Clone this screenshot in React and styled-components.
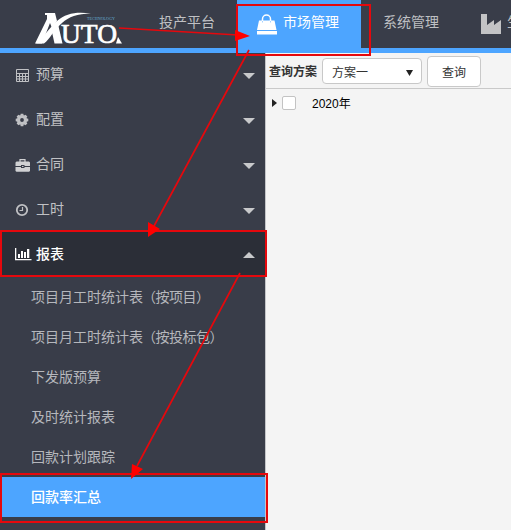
import React from "react";
import styled, { createGlobalStyle } from "styled-components";

const GlobalStyle = createGlobalStyle`
  * { box-sizing: border-box; }
  body {
    margin: 0;
    overflow: hidden;
    font-family: "Liberation Sans", "Noto Sans CJK SC", sans-serif;
    font-size: 14px;
  }
`;

const Page = styled.div`
  position: relative;
  display: flex;
  flex-direction: column;
  width: 511px;
  height: 530px;
  overflow: hidden;
  background: #f4f4f4;
`;

const Header = styled.header`
  display: flex;
  flex: none;
  height: 53px;
  background: #393d49;
  border-bottom: 5px solid #4da5ff;
`;

const LogoBox = styled.div`
  flex: none;
  width: 137px;
`;

const NavItem = styled.div`
  display: flex;
  flex: none;
  align-items: center;
  gap: 6px;
  width: ${(p) => p.$width}px;
  padding: 0 0 4px ${(p) => p.$inset}px;
  color: ${(p) => (p.$active ? "#fff" : "#bfc0c3")};
  background: ${(p) => (p.$active ? "#4da5ff" : "transparent")};
  line-height: 20px;
  white-space: nowrap;

  svg { flex: none; margin-top: 4px; }
`;

const Body = styled.div`
  display: flex;
  flex: 1;
  min-height: 0;
`;

const Sidebar = styled.nav`
  flex: none;
  width: 266px;
  background: #393d49;
  border-right: 1px solid #c4c5c8;
`;

const MenuRow = styled.div`
  display: flex;
  align-items: center;
  height: 45px;
  margin-top: ${(p) => (p.$active ? "-1px" : "0")};
  padding: 0 10px 3px 14px;
  color: ${(p) => (p.$active ? "#fff" : "#c0c1c4")};
  background: ${(p) => (p.$active ? "#2b2e37" : "transparent")};
  font-weight: ${(p) => (p.$active ? 500 : 400)};
`;

const MenuLabel = styled.span`
  padding-bottom: ${(p) => (p.$active ? 0 : 3)}px;
`;

const IconSlot = styled.span`
  display: flex;
  align-items: center;
  width: 22px;
  height: 18px;
  padding-top: 2px;
`;

const Caret = styled.i`
  width: 0;
  height: 0;
  margin: 3px 0 0 auto;
  border: 6px solid transparent;
  border-width: ${(p) => (p.$up ? "0 6px 6px" : "6px 6px 0")};
  border-color: ${(p) => (p.$up ? "transparent transparent #c8c9cb" : "#c8c9cb transparent transparent")};
`;

const SubRow = styled.div`
  display: flex;
  align-items: center;
  height: 40px;
  padding: 0 0 2px 31px;
  color: ${(p) => (p.$active ? "#fff" : "#b5b7bc")};
  background: ${(p) => (p.$active ? "#4da5ff" : "transparent")};
  font-weight: ${(p) => (p.$active ? 500 : 400)};
  white-space: nowrap;
`;

const Qualifier = styled.span`
  margin-left: -1px;
  letter-spacing: -0.5px;
`;

const Content = styled.main`
  flex: 1;
  min-width: 0;
`;

const Toolbar = styled.div`
  display: flex;
  align-items: center;
  height: 36px;
  padding: 1px 0 0 3px;
  border-bottom: 1px solid #c9c9c9;
  font-size: 12px;
  color: #333;
`;

const FieldLabel = styled.label`
  width: 53px;
  padding-top: 1px;
  font-weight: 700;
  line-height: 18px;
`;

const Select = styled.div`
  display: flex;
  align-items: center;
  justify-content: space-between;
  width: 100px;
  height: 26px;
  padding: 0 8px 0 9px;
  background: #fff;
  border: 1px solid #c8c8c8;
  border-radius: 4px;

  svg { margin-top: 4px; }
`;

const Button = styled.button`
  width: 54px;
  height: 31px;
  margin-left: 5px;
  padding: 0;
  font: inherit;
  color: #333;
  background: #fff;
  border: 1px solid #c9c9c9;
  border-radius: 4px;
`;

const TreeRow = styled.div`
  display: flex;
  align-items: center;
  height: 28px;
  padding: 0 0 1px 6px;
  color: #000;
  font-size: 12px;
`;

const Expander = styled.i`
  border: 4px solid transparent;
  border-left: 5px solid #222;
  border-right: 0;
`;

const Checkbox = styled.span`
  width: 14px;
  height: 14px;
  margin: 0 16px 0 5px;
  background: #fff;
  border: 1px solid #c3c3c3;
  border-radius: 2px;
`;

const Annotations = styled.svg`
  position: absolute;
  inset: 0;
  pointer-events: none;
`;

const Logo = () => (
  <svg width="137" height="48" fill="#fff">
    <path d="M45 13H55L57 21L52 28L50 23L42 43.5H35L47 19V15H45Z" />
    <path d="M36 43.5C45 36 49 28 57 21C66 13 77 11.5 91 13.5C77 13.5 69 17 62 23C53 31 50 39 44 43.5Z" />
    <path d="M52 32L58 24L62.5 43.5H54.5Z" />
    <text x="61" y="43" fontFamily="Liberation Serif, serif" fontSize="28" textLength="56" lengthAdjust="spacingAndGlyphs" stroke="#fff" strokeWidth=".7">UTO</text>
    <path d="M118 37L122 43.5H116Z" />
    <text x="87" y="20" fontFamily="Liberation Serif, serif" fontSize="4.5" fill="#66add6" textLength="28" lengthAdjust="spacingAndGlyphs">TECHNOLOGY</text>
  </svg>
);

const BagIcon = () => (
  <svg width="20" height="21" viewBox="0 0 20 21">
    <path d="M5.5 8V5a4 4 0 0 1 8 0v3" fill="none" stroke="#fff" strokeWidth="1.5" />
    <path d="M2 6.5H17.5L19.5 16H0Z M0 17H20V20.5H0Z" fill="#fff" />
    <path d="M5.5 7v1.5M13.5 7v1.5" stroke="#a6d2ff" />
  </svg>
);

const FactoryIcon = () => (
  <svg width="20" height="21" fill="#c3c3c5">
    <path d="M0 0H6V11L13 6V11L20 6V20H0Z" />
  </svg>
);

const CalculatorIcon = () => (
  <svg width="16" height="15" fill="none" stroke="#c0c1c4">
    <path d="M2.5 1.5H14.5V13.5H2.5ZM2.5 5.5H14.5M2.5 8.5H14.5M2.5 11H14.5M5.5 5.5V13.5M8.5 5.5V13.5M11.5 5.5V13.5" />
  </svg>
);

const GearIcon = () => (
  <svg width="16" height="14" viewBox="-8 -7 16 14">
    <circle r="3.5" fill="none" stroke="#c0c1c4" strokeWidth="3.2" />
    <g fill="#c0c1c4">
      {[0, 45, 90, 135, 180, 225, 270, 315].map((a) => (
        <path key={a} d="M-1.7 -4.2L-1.3 -6.3H1.3L1.7 -4.2Z" transform={`rotate(${a})`} />
      ))}
    </g>
  </svg>
);

const BriefcaseIcon = () => (
  <svg width="17" height="13" viewBox="-1 0 17 13" fill="#d0d1d3">
    <path d="M5 3V.7H10V3" fill="none" stroke="#d0d1d3" strokeWidth="1.2" />
    <path d="M1.5 2.5H14L15 3.5V7H9.5V6H6V7H.5V3.5ZM.5 8H6V9H9.5V8H15V12L14 12.8H1.5L.5 12ZM7 7H8.5V8H7Z" />
  </svg>
);

const ClockIcon = () => (
  <svg width="16" height="14" fill="none" stroke="#c0c1c4">
    <circle cx="8" cy="7" r="5.2" strokeWidth="1.8" />
    <path d="M8.5 4V7.5H5.5" strokeWidth="1.2" />
  </svg>
);

const ChartIcon = () => (
  <svg width="18" height="13" fill="#fff">
    <path d="M1 0H2.3V11H17.5V12.2H1ZM4 6H6V10H4ZM7 3H9V10H7ZM10 4H12V10H10ZM13 1H15.3V10H13Z" />
  </svg>
);

const menu = [
  { label: "预算", Icon: CalculatorIcon },
  { label: "配置", Icon: GearIcon },
  { label: "合同", Icon: BriefcaseIcon },
  { label: "工时", Icon: ClockIcon },
  { label: "报表", Icon: ChartIcon, open: true },
];

const reports = [
  { label: "项目月工时统计表", qualifier: "（按项目）" },
  { label: "项目月工时统计表", qualifier: "（按投标包）" },
  { label: "下发版预算" },
  { label: "及时统计报表" },
  { label: "回款计划跟踪" },
  { label: "回款率汇总", active: true },
];

export default function App() {
  return (
    <>
      <GlobalStyle />
      <Page>
        <Header>
          <LogoBox><Logo /></LogoBox>
          <NavItem $width={100} $inset={22}>投产平台</NavItem>
          <NavItem $width={124} $inset={20} $active><BagIcon />市场管理</NavItem>
          <NavItem $width={98} $inset={22}>系统管理</NavItem>
          <NavItem $width={100} $inset={22}><FactoryIcon />生产管理</NavItem>
        </Header>
        <Body>
          <Sidebar>
            {menu.map(({ label, Icon, open }) => (
              <MenuRow key={label} $active={open}>
                <IconSlot><Icon /></IconSlot>
                <MenuLabel $active={open}>{label}</MenuLabel>
                <Caret $up={open} />
              </MenuRow>
            ))}
            {reports.map(({ label, qualifier, active }) => (
              <SubRow key={label + (qualifier || "")} $active={active}>
                {label}
                {qualifier && <Qualifier>{qualifier}</Qualifier>}
              </SubRow>
            ))}
          </Sidebar>
          <Content>
            <Toolbar>
              <FieldLabel>查询方案</FieldLabel>
              <Select>
                方案一
                <svg width="7" height="6"><path d="M0 0H7L3.5 6Z" fill="#222" /></svg>
              </Select>
              <Button>查询</Button>
            </Toolbar>
            <TreeRow>
              <Expander />
              <Checkbox />
              2020年
            </TreeRow>
          </Content>
        </Body>
        <Annotations width="511" height="530" fill="none" stroke="#e5080d" strokeWidth="2">
          <path d="M237 5H370V55H237ZM1 231H266V276H1ZM1 474H267V522H1Z" />
          <path d="M119 28L238 35M249 50L154 226M240 273L137 466" strokeWidth="1.7" />
          <path d="M235 30L250 36L235 41ZM148 222L160 229L148 237ZM132 464L143 469L131 479Z" fill="#f00" stroke="none" />
        </Annotations>
      </Page>
    </>
  );
}
